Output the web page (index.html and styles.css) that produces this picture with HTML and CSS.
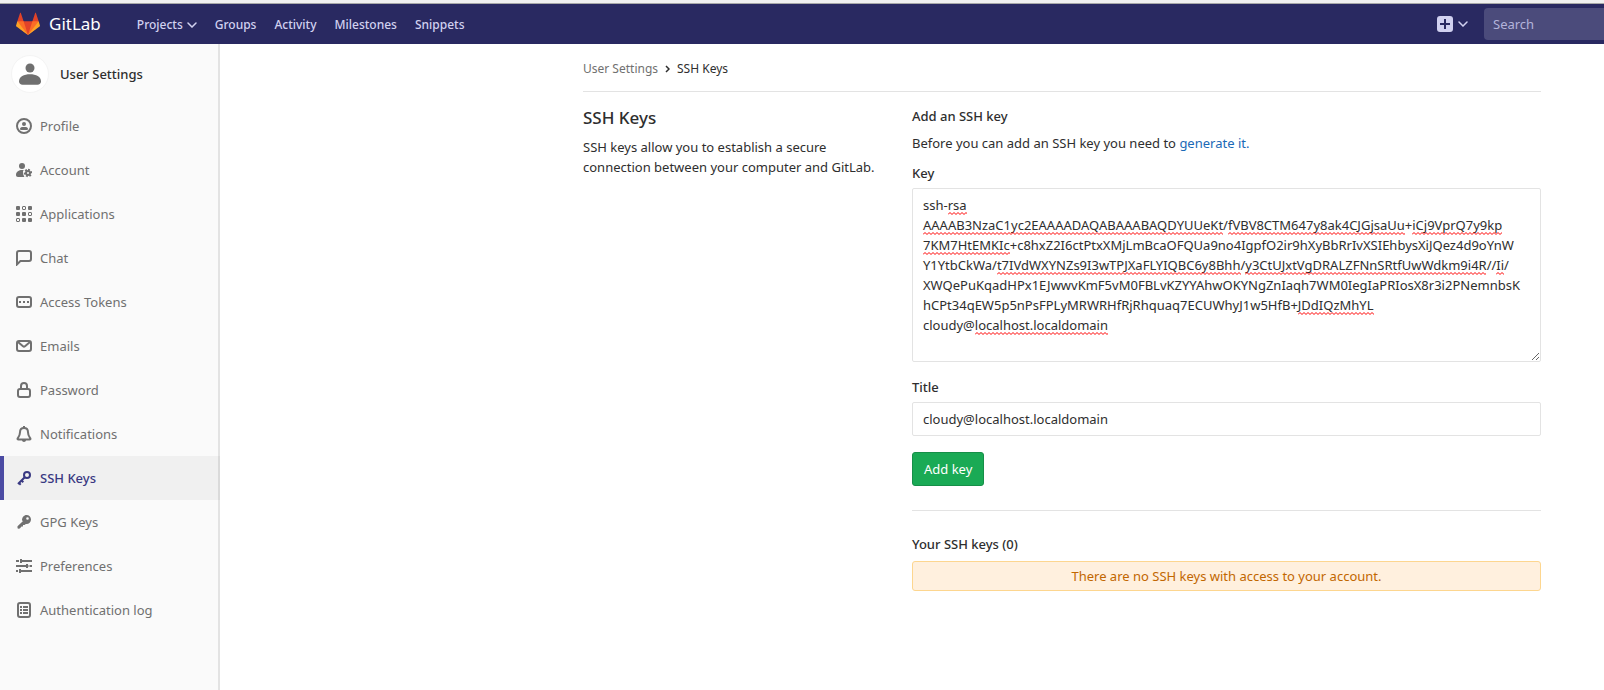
FILE: index.html
```html
<!DOCTYPE html>
<html lang="en">
<head>
<meta charset="utf-8">
<title>SSH Keys · User Settings · GitLab</title>
<link rel="stylesheet" href="styles.css">
</head>
<body>
<header class="navbar">
  <a class="brand" href="#">
    <svg class="logo" viewBox="0 0 36 36" aria-hidden="true">
      <path fill="#e24329" d="M2 14l9.38 9v-9l-4-12.28c-.205-.632-1.176-.632-1.38 0z"/>
      <path fill="#e24329" d="M34 14l-9.38 9v-9l4-12.28c.205-.632 1.176-.632 1.38 0z"/>
      <path fill="#e24329" d="M18 34.38 3 14h30z"/>
      <path fill="#fc6d26" d="M18 34.38 11.38 14H2l4 11z"/>
      <path fill="#fc6d26" d="M18 34.38 24.62 14H34l-4 11z"/>
      <path fill="#fca326" d="M2 14 .1 20.16c-.18.565 0 1.2.5 1.56L18.02 34.38z"/>
      <path fill="#fca326" d="M34 14l1.9 6.16c.18.565 0 1.2-.5 1.56L18 34.38z"/>
    </svg>
    <span>GitLab</span>
  </a>
  <nav class="main-nav" aria-label="Main">
    <button class="nav-link" type="button">Projects
      <svg class="caret" viewBox="0 0 10 6" aria-hidden="true"><path d="M1 1l4 4 4-4"/></svg>
    </button>
    <a class="nav-link" href="#">Groups</a>
    <a class="nav-link" href="#">Activity</a>
    <a class="nav-link" href="#">Milestones</a>
    <a class="nav-link" href="#">Snippets</a>
  </nav>
  <button class="new-menu" type="button" aria-label="New">
    <svg class="plus" viewBox="0 0 16 16" aria-hidden="true"><rect width="16" height="16" rx="3" fill="#d1d1f0"/><path d="M8 3v10M3 8h10" stroke="#292961" stroke-width="2"/></svg>
    <svg class="caret" viewBox="0 0 10 6" aria-hidden="true"><path d="M1 1l4 4 4-4"/></svg>
  </button>
  <input class="search" type="search" placeholder="Search" aria-label="Search">
</header>
<div class="page">
  <aside class="sidebar">
    <a class="context" href="#">
      <span class="avatar"><svg viewBox="0 0 24 24" aria-hidden="true"><circle cx="12" cy="6" r="4.5"/><path d="M1 19.5C1 14.5 6 12.3 12 12.3s11 2.200 11 7.200c0 2-1.500 3.200-3.500 3.200h-15C2.500 22.700 1 21.500 1 19.500z"/></svg></span>
      <span>User Settings</span>
    </a>
    <nav aria-label="User settings">
      <ul class="side-nav">
        <li><a href="#"><svg viewBox="0 0 16 16" aria-hidden="true"><circle class="line" cx="8" cy="8" r="7"/><circle cx="8" cy="6" r="2"/><path d="M4 10.800C4 9.400 5.700 9 8 9s4 .400 4 1.800c0 .800-.600 1.200-1.200 1.200H5.200C4.600 12 4 11.600 4 10.800z"/></svg>Profile</a></li>
        <li><a href="#"><svg viewBox="0 0 16 16" aria-hidden="true"><circle cx="6" cy="4" r="3"/><path d="M7.700 8.100C7 9 6.800 10 7 11c.1 1.200.6 2.200 1.400 4H2c-1.300 0-2-.800-2-2 0-3.300 3-5 6-5 .600 0 1.200 0 1.700.1z"/><circle class="line" cx="12" cy="11" r="2"/><path class="line" stroke-dasharray="1.800 1.540" d="M12 7.800a3.200 3.200 0 1 1 0 6.400 3.200 3.200 0 0 1 0-6.400z"/></svg>Account</a></li>
        <li><a href="#"><svg viewBox="0 0 16 16" aria-hidden="true"><rect width="4" height="4" rx="1"/><rect class="thin" x="6.500" y=".5" width="3" height="3" rx=".5"/><rect x="12" width="4" height="4" rx="1"/><rect y="6" width="4" height="4" rx="1"/><rect x="6" y="6" width="4" height="4" rx="1"/><rect class="thin" x="12.500" y="6.500" width="3" height="3" rx=".5"/><rect class="thin" x=".5" y="12.500" width="3" height="3" rx=".5"/><rect x="6" y="12" width="4" height="4" rx="1"/><rect x="12" y="12" width="4" height="4" rx="1"/></svg>Applications</a></li>
        <li><a href="#"><svg viewBox="0 0 16 16" aria-hidden="true"><path class="line" d="M1 14.400V3a2 2 0 0 1 2-2h10a2 2 0 0 1 2 2v6a2 2 0 0 1-2 2H4.400z"/></svg>Chat</a></li>
        <li><a href="#"><svg viewBox="0 0 16 16" aria-hidden="true"><rect class="line" x="1" y="3" width="14" height="10" rx="2"/><path d="M3 7h2v2H3zM7 7h2v2H7zM11 7h2v2h-2z"/></svg>Access Tokens</a></li>
        <li><a href="#"><svg viewBox="0 0 16 16" aria-hidden="true"><rect class="line" x="1" y="3" width="14" height="10" rx="2"/><path class="line" d="M2 4l5 4.300c.600.500 1.400.500 2 0L14 4"/></svg>Emails</a></li>
        <li><a href="#"><svg viewBox="0 0 16 16" aria-hidden="true"><rect class="line" x="2" y="7" width="12" height="8" rx="2"/><path class="line" d="M5 7V4c0-2 1.200-3 3-3s3 1 3 3v3"/></svg>Password</a></li>
        <li><a href="#"><svg viewBox="0 0 16 16" aria-hidden="true"><path class="line" d="M8 2c-2.400 0-4 1.800-4 4.200 0 3-1.200 4.300-2.300 6.100-.400.700-.1 1.200.700 1.200h11.200c.800 0 1.100-.500.700-1.200C13.200 10.500 12 9.200 12 6.200 12 3.800 10.400 2 8 2z"/><path d="M7 0h2v2H7zM6 14h4c0 1.200-.800 2-2 2s-2-.800-2-2z"/></svg>Notifications</a></li>
        <li><a class="active" href="#" aria-current="page"><svg viewBox="0 0 16 16" aria-hidden="true"><circle class="line" cx="11" cy="5" r="3"/><path class="line" d="M9 7l-7 7M5.500 10.500l1.800 1.800M3 13l1.700 1.700"/></svg>SSH Keys</a></li>
        <li><a href="#"><svg viewBox="0 0 16 16" aria-hidden="true"><path fill-rule="evenodd" d="M7.600 8.100 6 6.300C6 3.300 8 1 10.500 1S15 3 15 5.500 13 10 10.500 10h-.600L8.500 11H7v1.500H5.500L3.800 14.500 2 14.700 1.500 14v-1.700l5.300-5.100zM11.500 3.200a1.300 1.300 0 1 0 0 2.600 1.300 1.300 0 0 0 0-2.600z"/></svg>GPG Keys</a></li>
        <li><a href="#"><svg viewBox="0 0 16 16" aria-hidden="true"><path d="M0 2h3v2H0zM4 1h2v1h10v2H6v1H4zM0 7h10V6h2v1h.500v2H12v1h-2V9H0zM13.500 7H16v2h-2.500zM0 12h2v2H0zM3 11h2v1h11v2H5v1H3z"/></svg>Preferences</a></li>
        <li><a href="#"><svg viewBox="0 0 16 16" aria-hidden="true"><rect class="line" x="2" y="1" width="12" height="14" rx="2"/><path d="M4 4h2v2H4zM7 4h5v2H7zM4 7h2v2H4zM7 7h5v2H7zM4 10h2v2H4zM7 10h5v2H7z"/></svg>Authentication log</a></li>
      </ul>
    </nav>
  </aside>
  <main class="content">
    <div class="container">
      <nav class="breadcrumbs" aria-label="Breadcrumb">
        <a href="#">User Settings</a>
        <svg viewBox="0 0 5 8" aria-hidden="true"><path d="M1 1l3 3-3 3"/></svg>
        <a class="current" href="#">SSH Keys</a>
      </nav>
      <div class="columns">
        <section class="intro">
          <h1>SSH Keys</h1>
          <p>SSH keys allow you to establish a secure connection between your computer and GitLab.</p>
        </section>
        <div class="panel">
          <h2>Add an SSH key</h2>
          <p class="hint">Before you can add an SSH key you need to <a href="#">generate it.</a></p>
          <form>
            <label for="key">Key</label>
            <div class="key-field">
              <textarea class="field" id="key" rows="8" spellcheck="false">ssh-rsa
AAAAB3NzaC1yc2EAAAADAQABAAABAQDYUUeKt/fVBV8CTM647y8ak4CJGjsaUu+iCj9VprQ7y9kp
7KM7HtEMKIc+c8hxZ2I6ctPtxXMjLmBcaOFQUa9no4IgpfO2ir9hXyBbRrIvXSIEhbysXiJQez4d9oYnW
Y1YtbCkWa/t7IVdWXYNZs9I3wTPJXaFLYIQBC6y8Bhh/y3CtUJxtVgDRALZFNnSRtfUwWdkm9i4R//Ii/
XWQePuKqadHPx1EJwwvKmF5vM0FBLvKZYYAhwOKYNgZnIaqh7WM0IegIaPRIosX8r3i2PNemnbsK
hCPt34qEW5p5nPsFPLyMRWRHfRjRhquaq7ECUWhyJ1w5HfB+JDdIQzMhYL
cloudy@localhost.localdomain
</textarea>
              <div class="spelling" id="spelling" aria-hidden="true"></div>
            </div>
            <label for="title">Title</label>
            <input class="field" id="title" type="text" value="cloudy@localhost.localdomain">
            <button class="submit" type="submit">Add key</button>
          </form>
          <hr>
          <h2>Your SSH keys (0)</h2>
          <p class="notice">There are no SSH keys with access to your account.</p>
        </div>
      </div>
    </div>
  </main>
</div>
<script src="spelling.js"></script>
</body>
</html>
```
FILE: styles.css
```css
* { box-sizing: border-box; }
body {
  margin: 0;
  min-height: 100vh;
  display: flex;
  flex-direction: column;
  overflow-x: hidden;
  background: #fff;
  color: #2e2e2e;
  font: 13px/20px "Noto Sans", "Open Sans", sans-serif;
}
a { color: inherit; text-decoration: none; }
button, input, textarea { font: inherit; color: inherit; }
button { border: 0; background: none; padding: 0; cursor: pointer; }
h1, h2, p { margin: 0; }

.navbar {
  display: flex;
  align-items: center;
  height: 44px;
  padding: 1px 0 0 16px;
  background: #292961;
  border-top: 3px solid #f0f0f0;
  box-shadow: inset 0 1px #a8a8a8;
  color: #d1d1f0;
}
.brand { display: flex; align-items: center; gap: 9px; color: #fff; font-size: 17px; }
.logo { width: 24px; height: 24px; }
.main-nav { display: flex; gap: 18px; margin-left: 36px; padding-top: 1px; }
.nav-link { display: flex; align-items: center; gap: 4px; font-size: 12px; font-weight: 500; }
.caret { width: 10px; height: 6px; fill: none; stroke: #d1d1f0; stroke-width: 1.5; stroke-linecap: round; }
.new-menu { display: flex; align-items: center; gap: 5px; margin-left: auto; }
.plus { width: 16px; height: 16px; }
.search {
  width: 120px;
  height: 32px;
  margin-left: 16px;
  padding: 0 9px;
  border: 0;
  border-radius: 4px 0 0 4px;
  background: #4b4b7b;
}
.search::placeholder { color: #b3b3da; opacity: 1; }

.page { display: flex; flex: 1; }
.sidebar {
  flex: 0 0 220px;
  background: #fafafa;
  box-shadow: inset -2px 0 #e3e3e3;
}
.context { display: flex; align-items: center; gap: 11px; height: 60px; padding-left: 11px; font-weight: 500; }
.avatar { display: grid; place-items: center; width: 38px; height: 38px; border: 1px solid #f4f4f4; border-radius: 50%; background: #fff; }
.avatar svg { width: 24px; height: 24px; fill: #707070; }
.side-nav { margin: 0; padding: 0; list-style: none; }
.side-nav a { display: flex; align-items: center; gap: 8px; height: 44px; padding-left: 16px; color: #707070; }
.side-nav svg { width: 16px; height: 16px; fill: #707070; stroke: none; }
.side-nav .line { fill: none; stroke: #707070; stroke-width: 2; }
.side-nav .thin { fill: none; stroke: #707070; stroke-width: 1; }
.side-nav .active {
  background: rgba(0, 0, 0, 0.04);
  box-shadow: inset 4px 0 #4b4ba3;
  color: #393982;
  font-weight: 500;
}
.side-nav .active .line { stroke: #393982; }

.content { flex: 1; padding: 0 63px 40px 32px; }
.container { max-width: 958px; margin-left: auto; }
.breadcrumbs {
  display: flex;
  align-items: center;
  gap: 7px;
  height: 48px;
  padding-top: 2px;
  border-bottom: 1px solid #e3e3e3;
  color: #707070;
  font-size: 12px;
}
.breadcrumbs svg { width: 5px; height: 8px; fill: none; stroke: #2e2e2e; stroke-width: 1.5; }
.current { color: #2e2e2e; }
.columns { display: flex; gap: 32px; padding-top: 14px; }
.intro { flex: 0 0 31%; }
h1 { margin-bottom: 8px; font-size: 17px; font-weight: 500; line-height: 23px; }
.panel { flex: 1; min-width: 0; }
h2 { font-size: 13px; font-weight: 500; line-height: 20px; margin-bottom: 7px; }
.hint a { color: #1b69b6; }
.hint { margin-bottom: 10px; }
label { display: block; margin-bottom: 5px; font-weight: 500; }
.field {
  display: block;
  width: 100%;
  height: 34px;
  padding: 6px 10px;
  border: 1px solid #e3e3e3;
  border-radius: 2px;
  background: #fff;
}
.key-field { position: relative; margin-bottom: 15px; }
textarea.field { height: auto; resize: vertical; overflow: hidden; }
.spelling { position: absolute; inset: 0; overflow: hidden; pointer-events: none; }
.spelling svg { position: absolute; height: 3px; }
.submit {
  height: 34px;
  margin: 16px 0 24px;
  padding: 0 11px;
  border: 1px solid #168f48;
  border-radius: 3px;
  background: #1aaa55;
  color: #fff;
}
hr { margin: 0 0 23px; border: 0; border-top: 1px solid #e3e3e3; }
.notice {
  padding: 4px;
  border: 1px solid #fdd68f;
  border-radius: 3px;
  background: #fff0de;
  color: #c26700;
  text-align: center;
}
```
FILE: spelling.js
```js
const field = document.getElementById("key");
const layer = document.getElementById("spelling");
const marks = [
  [0, "rsa"],
  [1, "AAAAB3NzaC1yc2EAAAADAQABAAABAQDYUUeKt"],
  [1, "fVBV8CTM647y8ak4CJGjsaUu"],
  [1, "iCj9VprQ7y9kp"],
  [2, "7KM7HtEMKIc"],
  [3, "t7IVdWXYNZs9I3wTPJXaFLYIQBC6y8Bhh"],
  [3, "y3CtUJxtVgDRALZFNnSRtfUwWdkm9i4R"],
  [3, "Ii"],
  [5, "JDdIQzMhYL"],
  [6, "localhost.localdomain"]
];

function drawMarks() {
  const style = getComputedStyle(field);
  const pen = document.createElement("canvas").getContext("2d");
  pen.font = `${style.fontSize} ${style.fontFamily}`;
  const lines = field.value.split("\n");
  const left = parseFloat(style.paddingLeft) + 1;
  const top = parseFloat(style.paddingTop) + 1;
  const step = parseFloat(style.lineHeight);
  layer.replaceChildren();
  for (const [row, word] of marks) {
    const start = lines[row].indexOf(word);
    if (start < 0) continue;
    const x = Math.round(left + pen.measureText(lines[row].slice(0, start)).width);
    const width = Math.round(pen.measureText(word).width);
    let d = "M0 2.5";
    for (let i = 2; i <= width + 2; i += 2) d += `L${i} ${i % 4 ? 0.5 : 2.5}`;
    const svg = document.createElementNS("http://www.w3.org/2000/svg", "svg");
    svg.setAttribute("width", width);
    svg.style.left = `${x}px`;
    svg.style.top = `${top + row * step + 17}px`;
    const path = document.createElementNS("http://www.w3.org/2000/svg", "path");
    path.setAttribute("d", d);
    path.setAttribute("fill", "none");
    path.setAttribute("stroke", "#f00");
    svg.append(path);
    layer.append(svg);
  }
}

drawMarks();
field.addEventListener("input", drawMarks);
```
